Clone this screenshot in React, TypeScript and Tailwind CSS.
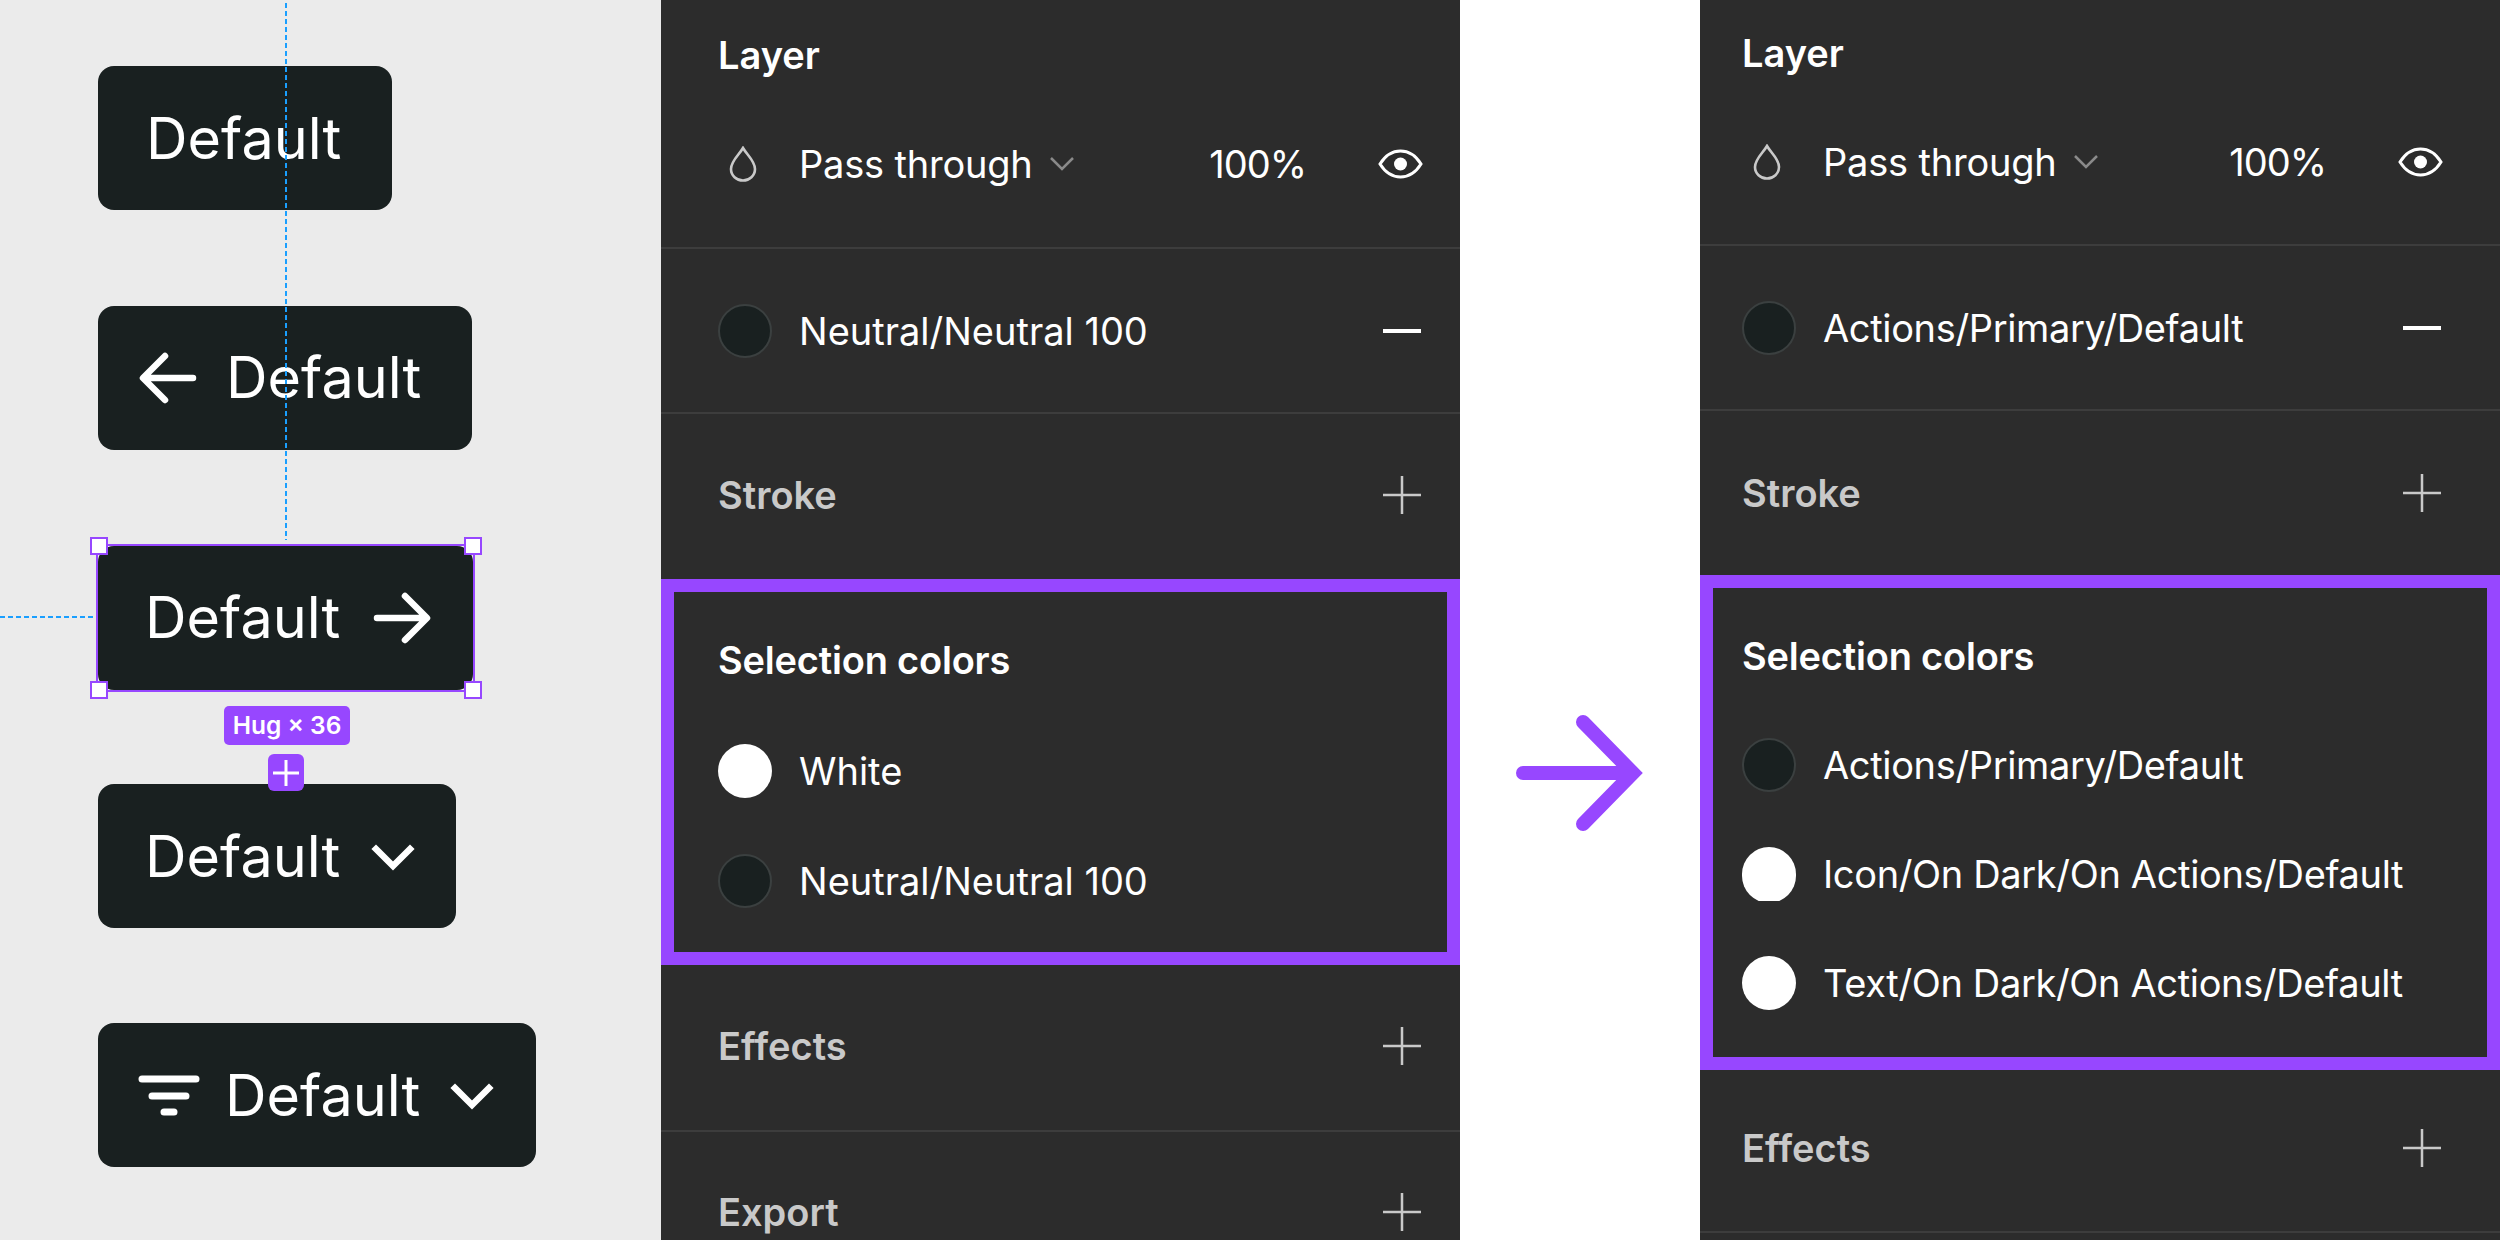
import React from "react";

const BtnBase = ({ className, children }: { className: string; children: React.ReactNode }) => (
  <div className={`relative flex h-[144px] w-fit items-center rounded-[16px] bg-[#192020] text-[57.5px] font-normal leading-none text-white ${className}`}>
    {children}
  </div>
);

const ArrowLeft = () => (
  <svg className="block h-[64px] w-[64px] shrink-0" viewBox="0 0 64 64" fill="none" stroke="#fff" strokeWidth="6.5" strokeLinecap="round" strokeLinejoin="round">
    <path d="M57 32H8M29 10L7 32L29 54" />
  </svg>
);
const ArrowRight = () => (
  <svg className="block h-[64px] w-[64px] shrink-0" viewBox="0 0 64 64" fill="none" stroke="#fff" strokeWidth="6.5" strokeLinecap="round" strokeLinejoin="round">
    <path d="M7 32H56M35 10L57 32L35 54" />
  </svg>
);
const Chevron = () => (
  <svg className="block h-[64px] w-[64px] shrink-0" viewBox="0 0 64 64" fill="none" stroke="#fff" strokeWidth="6.5" strokeLinecap="square">
    <path d="M15 24L32 41L49 24" />
  </svg>
);
const Filter = () => (
  <svg className="block h-[64px] w-[64px] shrink-0" viewBox="0 0 64 64" fill="none" stroke="#fff" strokeWidth="7" strokeLinecap="round">
    <path d="M5 15H59M15 32H49M27 48H37" />
  </svg>
);

const Handle = ({ className }: { className: string }) => (
  <div className={`absolute h-[18px] w-[18px] border-[2.5px] border-[#9747ff] bg-white ${className}`} />
);

const Canvas = () => (
  <div className="relative flex h-full w-[661px] shrink-0 flex-col bg-[#ebebeb] pl-[98px] pt-[66px]">
    <BtnBase className="pl-[48px] pr-[51px] pt-[2px]">
      <span>Default</span>
    </BtnBase>
    <BtnBase className="mt-[96px] gap-[26px] pl-[38px] pr-[51px]">
      <ArrowLeft />
      <span>Default</span>
    </BtnBase>
    <BtnBase className="mt-[96px] gap-[30px] pl-[47px] pr-[39px]">
      <span>Default</span>
      <ArrowRight />
      <div className="absolute -inset-[2px] border-[2.5px] border-[#9747ff]" />
      <Handle className="-left-[8px] -top-[9px]" />
      <Handle className="-right-[9px] -top-[9px]" />
      <Handle className="-bottom-[9px] -left-[8px]" />
      <Handle className="-bottom-[9px] -right-[9px]" />
      <div className="absolute left-[126px] top-[160px] flex h-[39px] w-[126px] items-center justify-center rounded-[5px] bg-[#9747ff] text-[24.5px] font-semibold text-white">
        Hug × 36
      </div>
      <div className="absolute left-[170px] top-[208px] z-10 flex h-[37px] w-[36px] items-center justify-center rounded-[6px] bg-[#9747ff]">
        <svg className="block h-[26px] w-[26px]" viewBox="0 0 26 26" fill="none" stroke="#fff" strokeWidth="3">
          <path d="M13 0V26M0 13H26" />
        </svg>
      </div>
    </BtnBase>
    <BtnBase className="mt-[94px] gap-[21px] pl-[47px] pr-[31px] pt-[2px]">
      <span>Default</span>
      <Chevron />
    </BtnBase>
    <BtnBase className="mt-[95px] gap-[24px] pl-[39px] pr-[32px] pt-[2px]">
      <Filter />
      <span className="mr-[-4px]">Default</span>
      <Chevron />
    </BtnBase>
    <svg className="absolute left-[285px] top-0 z-20 h-[540px] w-[2px]" viewBox="0 0 2 540">
      <path d="M1 3V540" stroke="#1a9fff" strokeWidth="2" strokeDasharray="5 3" />
    </svg>
    <svg className="absolute left-0 top-[616px] h-[2px] w-[95px]" viewBox="0 0 95 2">
      <path d="M0 1H95" stroke="#1a9fff" strokeWidth="2" strokeDasharray="5 3" />
    </svg>
  </div>
);

const Plus = () => (
  <svg className="block h-[38px] w-[38px] shrink-0" viewBox="0 0 38 38" fill="none" stroke="#c9c9c9" strokeWidth="2.5">
    <path d="M19 0V38M0 19H38" />
  </svg>
);
const Minus = () => (
  <svg className="block h-[38px] w-[38px] shrink-0" viewBox="0 0 38 38" fill="none" stroke="#fff" strokeWidth="4">
    <path d="M0 19H38" />
  </svg>
);
const Drop = () => (
  <svg className="block h-[36px] w-[28px]" viewBox="0 0 28 36" fill="none" stroke="#c9c9c9" strokeWidth="2.6">
    <path d="M14 2C10 9 2 15 2 23C2 29.5 7.5 34.5 14 34.5C20.5 34.5 26 29.5 26 23C26 15 18 9 14 2Z" />
  </svg>
);
const Eye = () => (
  <svg className="block h-[30px] w-[45px] shrink-0" viewBox="0 0 45 30" fill="none" stroke="#fff" strokeWidth="3">
    <path d="M2 15C7 7 14 2 22.5 2C31 2 38 7 43 15C38 23 31 28 22.5 28C14 28 7 23 2 15Z" />
    <circle cx="22.5" cy="15" r="6.5" fill="#fff" stroke="none" />
  </svg>
);
const SmallChevron = () => (
  <svg className="ml-[17px] block h-[14px] w-[24px]" viewBox="0 0 24 14" fill="none" stroke="#8a8a8a" strokeWidth="2.5">
    <path d="M1 1L12 12L23 1" />
  </svg>
);

const Swatch = ({ kind, clip }: { kind: "dark" | "white"; clip?: boolean }) =>
  clip ? (
    <div className="mr-[27px] h-[54px] w-[54px] shrink-0 overflow-hidden">
      <div className="h-[56px] w-[54px] rounded-full bg-white" />
    </div>
  ) : (
    <div
      className={
        kind === "dark"
          ? "mr-[27px] h-[54px] w-[54px] shrink-0 rounded-full border-2 border-[#3b4040] bg-[#192020]"
          : "mr-[27px] h-[54px] w-[54px] shrink-0 rounded-full bg-white"
      }
    />
  );

type Color = { kind: "dark" | "white"; label: string; clip?: boolean };

const Panel = ({
  width,
  pad,
  padPr,
  heights,
  rowH,
  top,
  name,
  colors,
  last,
}: {
  width: string;
  pad: string;
  padPr: string;
  heights: string[];
  rowH: string;
  top: string;
  name: string;
  colors: Color[];
  last: boolean;
}) => (
  <div className={`flex h-full shrink-0 flex-col overflow-hidden bg-[#2c2c2c] text-[38px] leading-none text-white ${width}`}>
    <div className={`shrink-0 border-b-2 border-[#3d3d3d] ${pad} ${padPr} ${top} ${heights[0]}`}>
      <div className="flex h-[44px] items-center font-semibold">Layer</div>
      <div className="mt-[57px] flex h-[60px] items-center">
        <div className="w-[81px] shrink-0 pl-[11px]">
          <Drop />
        </div>
        <span className="tracking-[-0.2px]">Pass through</span>
        <SmallChevron />
        <span className="ml-auto tracking-[-1px]">100%</span>
        <div className="ml-[72px] mr-[-2px]">
          <Eye />
        </div>
      </div>
    </div>
    <div className={`flex shrink-0 items-center border-b-2 border-[#3d3d3d] ${pad} ${padPr} ${heights[1]}`}>
      <Swatch kind="dark" />
      <span className={last ? "tracking-[-0.35px]" : "tracking-normal"}>{name}</span>
      <div className="ml-auto">
        <Minus />
      </div>
    </div>
    <div className={`flex shrink-0 items-center justify-between ${last ? "pb-[1px]" : "pb-[3px]"} ${pad} ${padPr} ${heights[2]}`}>
      <span className="font-semibold text-[#c9c9c9]">Stroke</span>
      <Plus />
    </div>
    <div className={`shrink-0 border-[13px] border-[#9747ff] pt-[44px] ${heights[3]} ${last ? "pl-[29px]" : "pl-[44px]"}`}>
      <div className={`flex h-[48px] items-center font-semibold tracking-[-0.2px] ${last ? "mb-[30px]" : "mb-[32px]"}`}>Selection colors</div>
      {colors.map((c) => (
        <div key={c.label} className={`flex items-center ${rowH}`}>
          <Swatch kind={c.kind} clip={c.clip} />
          <span className={last ? "tracking-[-0.35px]" : "tracking-normal"}>{c.label}</span>
        </div>
      ))}
    </div>
    <div className={`flex shrink-0 items-center justify-between border-b-2 border-[#3d3d3d] ${last ? "pb-[6px]" : "pb-[3px]"} ${pad} ${padPr} ${heights[4]}`}>
      <span className="font-semibold text-[#c9c9c9]">Effects</span>
      <Plus />
    </div>
    {last ? null : (
      <div className={`flex h-[160px] shrink-0 items-center justify-between ${pad} ${padPr}`}>
        <span className="font-semibold text-[#c9c9c9]">Export</span>
        <Plus />
      </div>
    )}
  </div>
);

export default function App() {
  return (
    <div className="flex h-[1240px] w-[2500px] overflow-hidden bg-white font-['Inter',sans-serif]">
      <Canvas />
      <Panel
        width="w-[799px]"
        pad="pl-[57px]"
        padPr="pr-[39px]"
        top="pt-[33px]"
        heights={["h-[249px]", "h-[165px]", "h-[165px]", "h-[386px]", "h-[167px]"]}
        rowH="h-[110px]"
        name="Neutral/Neutral 100"
        colors={[
          { kind: "white", label: "White" },
          { kind: "dark", label: "Neutral/Neutral 100" },
        ]}
        last={false}
      />
      <div className="flex w-[240px] shrink-0 justify-start pl-[56px] pt-[714px]">
        <svg className="block h-[118px] w-[128px]" viewBox="0 0 128 118" fill="none" stroke="#9747ff" strokeWidth="14" strokeLinecap="round" strokeLinejoin="miter">
          <path d="M7 59H117M67 8L117 59L67 110" />
        </svg>
      </div>
      <Panel
        width="w-[800px]"
        pad="pl-[42px]"
        padPr="pr-[59px]"
        top="pt-[31px]"
        heights={["h-[246px]", "h-[165px]", "h-[164px]", "h-[495px]", "h-[163px]"]}
        rowH="h-[109px]"
        name="Actions/Primary/Default"
        colors={[
          { kind: "dark", label: "Actions/Primary/Default" },
          { kind: "white", label: "Icon/On Dark/On Actions/Default", clip: true },
          { kind: "white", label: "Text/On Dark/On Actions/Default" },
        ]}
        last
      />
    </div>
  );
}
